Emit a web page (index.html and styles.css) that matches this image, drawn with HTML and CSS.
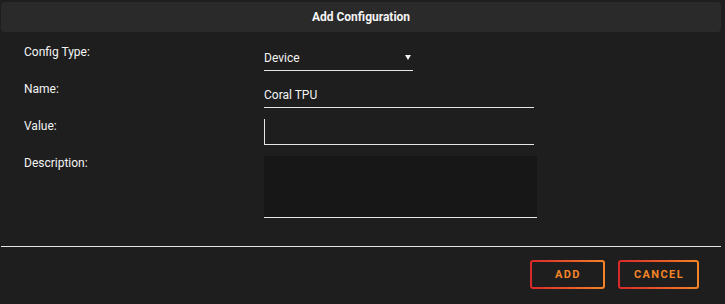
FILE: index.html
```html
<!DOCTYPE html>
<html lang="en">
<head>
    <meta charset="UTF-8">
    <title>Add Configuration</title>
    <link rel="stylesheet" href="styles.css">
</head>
<body>
    <div class="dialog">
        <div class="dialog-header">Add Configuration</div>
        <div class="dialog-body">
            <div class="form-row">
                <label class="form-label">Config Type:</label>
                <div class="select-field">
                    <span>Device</span>
                    <svg class="caret" width="6" height="5" viewBox="0 0 6 5"><path d="M0 0H6L3 5Z" fill="#f2f2f2"/></svg>
                </div>
            </div>
            <div class="form-row">
                <label class="form-label">Name:</label>
                <div class="text-field">Coral TPU</div>
            </div>
            <div class="form-row">
                <label class="form-label">Value:</label>
                <div class="text-field value-field"></div>
            </div>
            <div class="form-row">
                <label class="form-label">Description:</label>
                <div class="textarea-field"></div>
            </div>
        </div>
        <div class="dialog-footer">
            <button class="btn">ADD</button>
            <button class="btn">CANCEL</button>
        </div>
    </div>
</body>
</html>
```

FILE: styles.css
```css
:root {
    --bg: #1e1e1e;
    --header: #2a2a2a;
    --field: #171717;
    --text: #f4f4f4;
    --line: #e6e6e6;
    --red: #d8282a;
    --orange: #f58426;
}

* {
    margin: 0;
    padding: 0;
    box-sizing: border-box;
}

body {
    background-color: var(--bg);
    font-family: Roboto, 'Liberation Sans', sans-serif;
    color: var(--text);
    font-size: 12px;
}

.dialog {
    width: 720px;
    margin: 2px 0 0 1px;
}

.dialog-header {
    height: 30px;
    line-height: 30px;
    text-align: center;
    background-color: var(--header);
    border-radius: 4px;
    font-weight: bold;
    font-size: 12px;
}

.dialog-body {
    display: flex;
    flex-direction: column;
    gap: 11px;
    padding: 13px 0 0 23px;
}

.form-row {
    display: grid;
    grid-template-columns: 240px 1fr;
}

.form-label {
    line-height: 14px;
}

.select-field {
    width: 149px;
    height: 26px;
    padding: 6px 0 0 0;
    line-height: 14px;
    border-bottom: 1px solid var(--line);
    display: flex;
    justify-content: space-between;
}

.caret {
    margin: 4px 2px 0 0;
}

.text-field {
    width: 270px;
    height: 26px;
    padding-top: 6px;
    line-height: 14px;
    border-bottom: 1px solid var(--line);
}

.value-field {
    border-left: 1px solid var(--line);
}

.textarea-field {
    width: 273px;
    height: 62px;
    background-color: var(--field);
    border-bottom: 1px solid var(--line);
}

.dialog-footer {
    margin-top: 28px;
    border-top: 1px solid var(--line);
    padding: 13px 22px 0 0;
    display: flex;
    justify-content: flex-end;
    gap: 13px;
}

.btn {
    min-width: 75px;
    height: 29px;
    padding: 0 13px 0 14px;
    font-family: Roboto, 'Liberation Sans', sans-serif;
    font-size: 11px;
    font-weight: bold;
    letter-spacing: 1.4px;
    color: var(--orange);
    background: linear-gradient(var(--bg), var(--bg)) padding-box,
                linear-gradient(90deg, var(--red), var(--orange)) border-box;
    border: 2px solid transparent;
    border-radius: 3px;
    cursor: pointer;
}
```
